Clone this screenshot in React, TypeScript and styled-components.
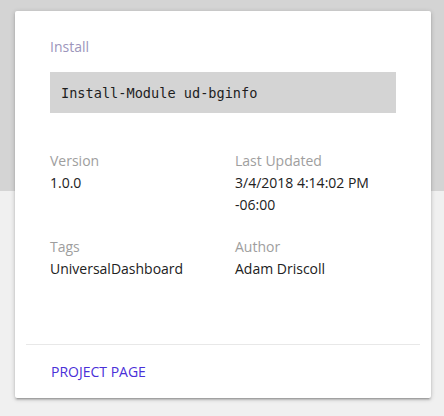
import React from "react";
import styled, { createGlobalStyle } from "styled-components";

const Global = createGlobalStyle`
  html, body { margin: 0; padding: 0; }
  body {
    width: 444px;
    height: 416px;
    overflow: hidden;
    background: linear-gradient(#d4d4d4 0 191px, #f0f0f0 191px);
    font-family: "Open Sans", "Noto Sans", sans-serif;
  }
`;

const Card = styled.div`
  width: 416px;
  margin: 11px 0 0 15px;
  background: #ffffff;
  border-radius: 2px;
  box-shadow: 0 2px 2px 0 rgba(0,0,0,0.14), 0 3px 1px -2px rgba(0,0,0,0.12), 0 1px 5px 0 rgba(0,0,0,0.2);
`;

const Content = styled.div`
  padding: 25px 35px 64px 35px;
`;

const Label = styled.div`
  font-size: 14px;
  line-height: 22px;
  color: #9e9e9e;
`;

const InstallLabel = styled(Label)`
  color: #9c95bb;
`;

const CodeBox = styled.div`
  margin-top: 14px;
  height: 41px;
  background: #d4d4d4;
  display: flex;
  align-items: center;
  padding: 0 11px;
  font-family: "DejaVu Sans Mono", monospace;
  font-size: 13.6px;
  color: #1e1e1e;
`;

const Grid = styled.div`
  display: grid;
  grid-template-columns: 185px 1fr;
  row-gap: 20px;
  margin-top: 37px;
`;

const Value = styled.div`
  font-size: 14px;
  line-height: 22px;
  color: #212121;
`;

const Actions = styled.div`
  margin: 0 11px;
  border-top: 1px solid #e8e8e8;
  height: 54px;
  display: flex;
  align-items: center;
  padding-left: 25px;
  padding-bottom: 1px;
  box-sizing: border-box;
`;

const Link = styled.a`
  font-size: 14px;
  color: #4a30d8;
  text-transform: uppercase;
  text-decoration: none;
`;

const fields = [
  { label: "Version", value: "1.0.0" },
  { label: "Last Updated", value: "3/4/2018 4:14:02 PM -06:00" },
  { label: "Tags", value: "UniversalDashboard" },
  { label: "Author", value: "Adam Driscoll" },
];

export default function App() {
  return (
    <>
      <Global />
      <Card>
        <Content>
          <InstallLabel>Install</InstallLabel>
          <CodeBox>Install-Module ud-bginfo</CodeBox>
          <Grid>
            {fields.map((f) => (
              <div key={f.label}>
                <Label>{f.label}</Label>
                <Value>{f.value}</Value>
              </div>
            ))}
          </Grid>
        </Content>
        <Actions>
          <Link href="#">Project Page</Link>
        </Actions>
      </Card>
    </>
  );
}
